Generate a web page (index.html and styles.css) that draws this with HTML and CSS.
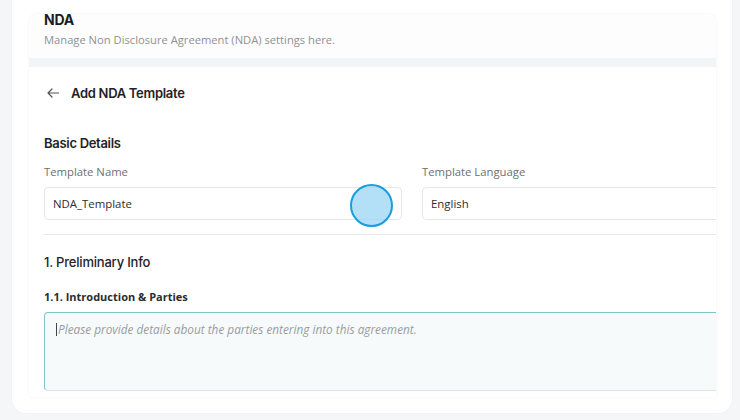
FILE: index.html
```html
<!DOCTYPE html>
<html lang="en">
  <head>
    <meta charset="UTF-8" />
    <meta name="viewport" content="width=device-width, initial-scale=1.0" />
    <title>NDA Settings</title>
    <link rel="stylesheet" href="styles.css">
  </head>
  <body>
    <div class="card">
      <div class="panel">
        <div class="panel-head">
          <h2 class="panel-title">NDA</h2>
          <p class="panel-sub">Manage Non Disclosure Agreement (NDA) settings here.</p>
        </div>
        <div class="panel-gap"></div>
        <div class="panel-body">
          <div class="form">
            <div class="back-row">
              <svg class="back-arrow" width="12" height="10" viewBox="0 0 12 10">
                <path d="M11.5 5H1M5 1L1 5l4 4" fill="none" stroke="#555" stroke-width="1.2" stroke-linecap="round" stroke-linejoin="round" />
              </svg>
              <span>Add NDA Template</span>
            </div>

            <h3 class="section-title first">Basic Details</h3>
            <div class="field-grid">
              <div class="field">
                <label class="field-label">Template Name</label>
                <div class="input">NDA_Template</div>
              </div>
              <div class="field">
                <label class="field-label">Template Language</label>
                <div class="input">English</div>
              </div>
            </div>

            <hr class="divider" />

            <h3 class="section-title light">1. Preliminary Info</h3>
            <h4 class="sub-title">1.1. Introduction &amp; Parties</h4>
            <div class="textarea">
              <span class="caret"></span><span class="placeholder">Please provide details about the parties entering into this agreement.</span>
            </div>
          </div>
        </div>
      </div>
    </div>

    <div class="touch-dot"></div>
  </body>
</html>
```

FILE: styles.css
```css
html,
body {
  margin: 0;
  height: 100%;
  overflow: hidden;
}
body {
  background-color: #f5f6f8;
  font-family: "Open Sans", "Noto Sans", sans-serif;
  color: #222;
  position: relative;
}
.card {
  background: #ffffff;
  width: 720px;
  box-sizing: border-box;
  margin: -16px 0 0 12px;
  padding: 30px 16px 16px 17px;
  border-radius: 14px;
  box-shadow: 0 0 2px rgba(0, 0, 0, 0.05);
}
.panel {
  height: 383px;
  border-radius: 8px 8px 0 0;
  box-shadow: 0 0 3px rgba(0, 0, 0, 0.06);
  background: #fefefe;
}
.panel-head {
  display: flow-root;
  background: #fdfdfd;
  border-radius: 8px 8px 0 0;
  padding: 0 15px 10px;
}
.panel-title {
  margin: -2px 0 0;
  font-family: Inter, "Noto Sans", sans-serif;
  font-size: 14px;
  font-weight: 700;
  line-height: 16px;
  color: #1b1d21;
  letter-spacing: -0.2px;
}
.panel-sub {
  margin: 4px 0 0;
  font-size: 11.2px;
  line-height: 16px;
  color: #8f9194;
}
.panel-gap {
  height: 9px;
  background: #f3f4f6;
}
.panel-body {
  height: 330px;
  box-sizing: border-box;
  overflow: hidden;
  background: #ffffff;
  padding: 16px 0 0 15px;
}
.form {
  width: 736px;
}
.back-row {
  display: flex;
  align-items: center;
  gap: 12px;
  height: 20px;
  padding-left: 3px;
  font-family: Inter, "Noto Sans", sans-serif;
  font-size: 13px;
  font-weight: 600;
  color: #1f2226;
  letter-spacing: -0.3px;
}
.section-title {
  margin: 17px 0 0;
  font-family: Inter, "Noto Sans", sans-serif;
  font-size: 13px;
  font-weight: 600;
  line-height: 20px;
  color: #1f2226;
  letter-spacing: -0.3px;
}
.section-title.first {
  margin-top: 30px;
}
.section-title.light {
  font-weight: 500;
  letter-spacing: -0.2px;
}
.field-grid {
  display: grid;
  grid-template-columns: 358px 358px;
  gap: 20px;
  margin-top: 11px;
}
.field-label {
  display: block;
  font-size: 11.3px;
  line-height: 16px;
  color: #6d6f72;
  margin-bottom: 7px;
}
.input {
  height: 33px;
  box-sizing: border-box;
  border: 1px solid #e4e6ea;
  border-radius: 4px;
  padding: 0 8px;
  display: flex;
  align-items: center;
  font-size: 11.4px;
  color: #2b2d30;
}
.divider {
  border: none;
  border-top: 1px solid #e6e8eb;
  margin: 14px 0 0;
}
.sub-title {
  margin: 17px 0 0;
  font-size: 11px;
  font-weight: 700;
  line-height: 16px;
  color: #2a2c2f;
}
.textarea {
  margin-top: 7px;
  height: 79px;
  box-sizing: border-box;
  border: 1px solid #7fc5c6;
  border-bottom-color: #dfe5e7;
  border-radius: 4px;
  background: #f6fafb;
  padding: 8px 11px;
  display: flex;
  align-items: flex-start;
  line-height: 16px;
}
.caret {
  width: 1px;
  height: 13px;
  margin-top: 2px;
  background: #444;
}
.placeholder {
  margin-left: 1px;
  font-size: 11.8px;
  font-style: italic;
  color: #9a9c9e;
}
.touch-dot {
  position: absolute;
  left: 350px;
  top: 184px;
  width: 43px;
  height: 43px;
  box-sizing: border-box;
  border-radius: 50%;
  border: 2px solid #1a9ce0;
  background: rgba(150, 212, 242, 0.72);
}
```
